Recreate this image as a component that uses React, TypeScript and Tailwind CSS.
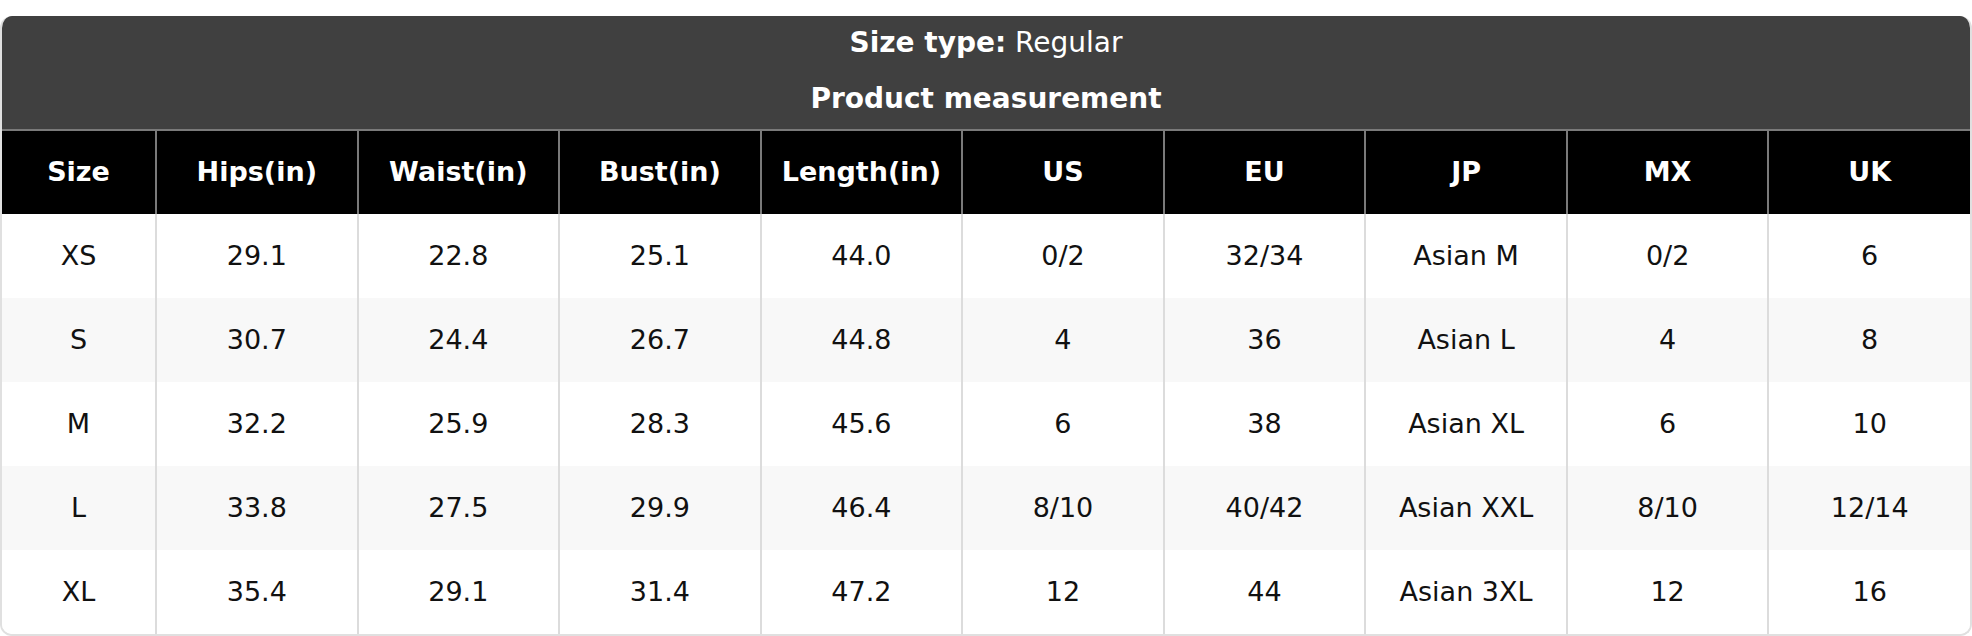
import React from 'react';

// Size chart rows
const columns = ["Size", "Hips(in)", "Waist(in)", "Bust(in)", "Length(in)", "US", "EU", "JP", "MX", "UK"];

const rows: string[][] = [
  ["XS", "29.1", "22.8", "25.1", "44.0", "0/2", "32/34", "Asian M", "0/2", "6"],
  ["S", "30.7", "24.4", "26.7", "44.8", "4", "36", "Asian L", "4", "8"],
  ["M", "32.2", "25.9", "28.3", "45.6", "6", "38", "Asian XL", "6", "10"],
  ["L", "33.8", "27.5", "29.9", "46.4", "8/10", "40/42", "Asian XXL", "8/10", "12/14"],
  ["XL", "35.4", "29.1", "31.4", "47.2", "12", "44", "Asian 3XL", "12", "16"],
];

export default function App() {
  return (
    <div className="bg-white w-[1972px] h-[636px] pt-[16px] font-['DejaVu_Sans',sans-serif]">
      <div className="w-[1972px] rounded-[12px] overflow-hidden border-2 border-t-0 border-[#e0e0e0] bg-white">
        <div className="bg-[#404040] text-white h-[113px] flex flex-col items-center pt-[10px]">
          <div className="text-[28px] leading-[34px]">
            <span className="font-bold">Size type:</span> Regular
          </div>
          <div className="text-[28px] leading-[34px] font-bold mt-[22px]">Product measurement</div>
        </div>
        <table className="w-full table-fixed border-collapse text-[27px]">
          <colgroup>
            <col className="w-[154px]" />
            {columns.slice(1).map(c => (
              <col key={c} />
            ))}
          </colgroup>
          <thead>
            <tr className="bg-black text-white h-[84px]">
              {columns.map((c, i) => (
                <th
                  key={c}
                  className={`font-bold text-center border-t-2 border-[#7a7a7a] ${i > 0 ? 'border-l-2' : ''}`}
                >
                  {c}
                </th>
              ))}
            </tr>
          </thead>
          <tbody>
            {rows.map((r, ri) => (
              <tr key={r[0]} className={`h-[84px] ${ri % 2 === 1 ? 'bg-[#f8f8f8]' : 'bg-white'}`}>
                {r.map((v, ci) => (
                  <td
                    key={ci}
                    className={`text-center text-[#111] ${ci > 0 ? 'border-l-2 border-[#dcdcdc]' : ''}`}
                  >
                    {v}
                  </td>
                ))}
              </tr>
            ))}
          </tbody>
        </table>
      </div>
    </div>
  );
}
